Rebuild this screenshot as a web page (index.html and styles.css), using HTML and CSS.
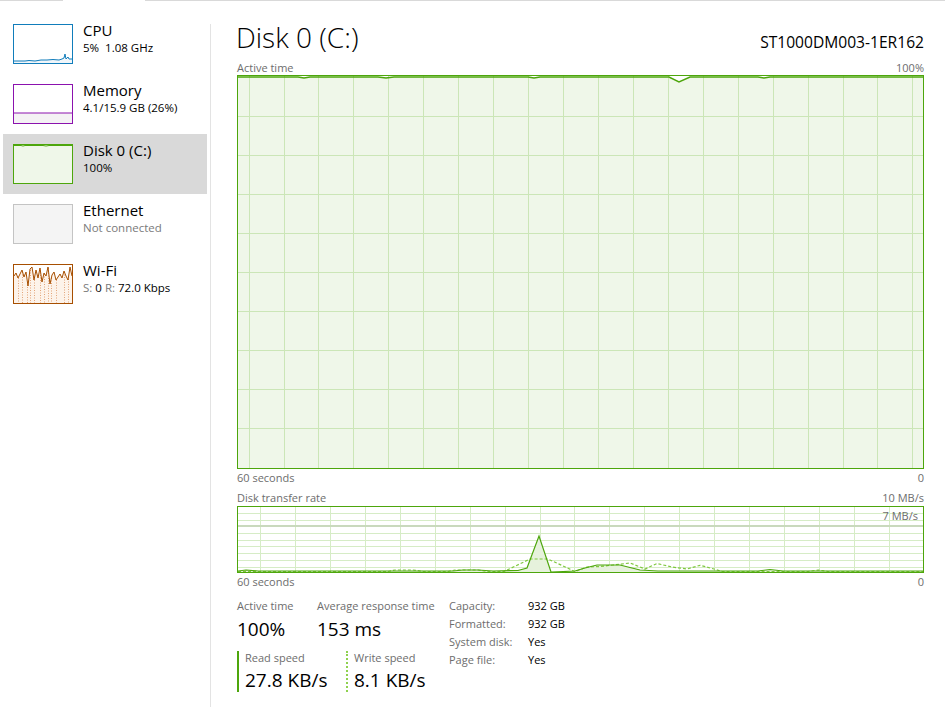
FILE: index.html
```html
<!DOCTYPE html>
<html lang="en">
<head>
    <meta charset="UTF-8">
    <meta name="viewport" content="width=device-width, initial-scale=1.0">
    <title>Task Manager - Performance</title>
    <link rel="stylesheet" href="styles.css">
</head>
<body>
    <div class="tabstrip">
        <div class="tab-seg tab-first"></div>
        <div class="tab-open"></div>
        <div class="tab-seg w71"></div>
        <div class="tab-seg w50"></div>
        <div class="tab-seg w40"></div>
        <div class="tab-seg w47"></div>
        <div class="tab-seg w52"></div>
        <div class="tab-seg tab-rest"></div>
    </div>

    <div class="app">
        <div class="sidebar">
            <div class="item">
                <svg class="thumb" width="60" height="40" viewBox="0 0 60 40">
                    <rect x="0.5" y="0.5" width="59" height="39" fill="#fff" stroke="#117dbb"/>
                    <polygon points="1,37 12,37 16,36.5 22,37 28,36 34,36 40,35.5 46,36 49,35 51,34 52,30 53,35 55,33 56,35 59,35 59,39 1,39" fill="#f1f6fa"/>
                    <polyline points="1,37 12,37 16,36.5 22,37 28,36 34,36 40,35.5 46,36 49,35 51,34 52,30 53,35 55,33 56,35 59,35" fill="none" stroke="#117dbb" stroke-width="1"/>
                </svg>
                <div class="item-text">
                    <div class="item-title">CPU</div>
                    <div class="item-sub">5%&nbsp; 1.08 GHz</div>
                </div>
            </div>
            <div class="item">
                <svg class="thumb" width="60" height="40" viewBox="0 0 60 40">
                    <rect x="0.5" y="0.5" width="59" height="39" fill="#fff" stroke="#8b12ae"/>
                    <rect x="1" y="29" width="58" height="10" fill="#f4f2f4"/>
                    <line x1="1" y1="29" x2="59" y2="29" stroke="#8b12ae" stroke-width="1"/>
                </svg>
                <div class="item-text">
                    <div class="item-title">Memory</div>
                    <div class="item-sub">4.1/15.9 GB (26%)</div>
                </div>
            </div>
            <div class="item selected">
                <svg class="thumb" width="60" height="40" viewBox="0 0 60 40">
                    <rect x="0.5" y="0.5" width="59" height="39" fill="#eff7e9" stroke="#4da60c"/>
                    <polyline points="1,1.5 8,1.5 10,2 12,1.5 30,1.5 33,2 36,1.5 59,1.5" fill="none" stroke="#4da60c" stroke-width="1"/>
                </svg>
                <div class="item-text">
                    <div class="item-title">Disk 0 (C:)</div>
                    <div class="item-sub">100%</div>
                </div>
            </div>
            <div class="item">
                <svg class="thumb" width="60" height="40" viewBox="0 0 60 40">
                    <rect x="0.5" y="0.5" width="59" height="39" fill="#f4f4f4" stroke="#c4c4c4"/>
                </svg>
                <div class="item-text">
                    <div class="item-title">Ethernet</div>
                    <div class="item-sub muted">Not connected</div>
                </div>
            </div>
            <div class="item">
                <svg class="thumb" width="60" height="40" viewBox="0 0 60 40">
                    <rect x="0.5" y="0.5" width="59" height="39" fill="#fff" stroke="#a74f01"/>
                    <polygon points="1,12 3,9 5,14 7,10 9,6 11,13 13,8 15,22 17,5 19,3 21,16 23,6 25,14 27,4 29,18 31,9 33,12 35,3 37,20 39,11 41,8 43,16 45,13 47,10 49,14 51,7 53,12 55,16 57,3 59,12 59,39 1,39" fill="#fdf3ea"/>
                    <g stroke="#e3a57a" stroke-width="1" stroke-dasharray="1,1.5">
                        <line x1="5.5" y1="14" x2="5.5" y2="39"/>
                        <line x1="9.5" y1="8" x2="9.5" y2="39"/>
                        <line x1="14.5" y1="18" x2="14.5" y2="39"/>
                        <line x1="17.5" y1="6" x2="17.5" y2="39"/>
                        <line x1="21.5" y1="16" x2="21.5" y2="39"/>
                        <line x1="27.5" y1="6" x2="27.5" y2="39"/>
                        <line x1="31.5" y1="10" x2="31.5" y2="39"/>
                        <line x1="35.5" y1="4" x2="35.5" y2="39"/>
                        <line x1="38.5" y1="14" x2="38.5" y2="39"/>
                        <line x1="43.5" y1="16" x2="43.5" y2="39"/>
                        <line x1="51.5" y1="8" x2="51.5" y2="39"/>
                        <line x1="55.5" y1="15" x2="55.5" y2="39"/>
                    </g>
                    <polyline points="1,12 3,9 5,14 7,10 9,6 11,13 13,8 15,22 17,5 19,3 21,16 23,6 25,14 27,4 29,18 31,9 33,12 35,3 37,20 39,11 41,8 43,16 45,13 47,10 49,14 51,7 53,12 55,16 57,3 59,12" fill="none" stroke="#a74f01" stroke-width="1"/>
                </svg>
                <div class="item-text">
                    <div class="item-title">Wi-Fi</div>
                    <div class="item-sub"><span class="muted">S:</span> 0 <span class="muted">R:</span> 72.0 Kbps</div>
                </div>
            </div>
        </div>

        <div class="divider"></div>

        <div class="main">
            <div class="page-head">
                <h1>Disk 0 (C:)</h1>
                <div class="model">ST1000DM003-1ER162</div>
            </div>

            <div class="chart-label">
                <span>Active time</span>
                <span>100%</span>
            </div>
            <div class="chart chart-big">
                <svg width="685" height="392" viewBox="0 0 685 392">
                    <polygon points="0,1 60,1 66,2 72,1 140,1 148,2 156,1 290,1 296,2 302,1 431,1 441,6 452,1 520,1 526,2 532,1 685,1 685,392 0,392" fill="#eff7e9"/>
                    <g stroke="#cbe6b7" stroke-width="1">
                        <line x1="11.5" y1="0" x2="11.5" y2="392"/>
                        <line x1="46.5" y1="0" x2="46.5" y2="392"/>
                        <line x1="80.5" y1="0" x2="80.5" y2="392"/>
                        <line x1="115.5" y1="0" x2="115.5" y2="392"/>
                        <line x1="150.5" y1="0" x2="150.5" y2="392"/>
                        <line x1="185.5" y1="0" x2="185.5" y2="392"/>
                        <line x1="220.5" y1="0" x2="220.5" y2="392"/>
                        <line x1="255.5" y1="0" x2="255.5" y2="392"/>
                        <line x1="290.5" y1="0" x2="290.5" y2="392"/>
                        <line x1="325.5" y1="0" x2="325.5" y2="392"/>
                        <line x1="360.5" y1="0" x2="360.5" y2="392"/>
                        <line x1="395.5" y1="0" x2="395.5" y2="392"/>
                        <line x1="430.5" y1="0" x2="430.5" y2="392"/>
                        <line x1="465.5" y1="0" x2="465.5" y2="392"/>
                        <line x1="500.5" y1="0" x2="500.5" y2="392"/>
                        <line x1="535.5" y1="0" x2="535.5" y2="392"/>
                        <line x1="570.5" y1="0" x2="570.5" y2="392"/>
                        <line x1="605.5" y1="0" x2="605.5" y2="392"/>
                        <line x1="639.5" y1="0" x2="639.5" y2="392"/>
                        <line x1="674.5" y1="0" x2="674.5" y2="392"/>
                        <line x1="0" y1="40.5" x2="685" y2="40.5"/>
                        <line x1="0" y1="79.5" x2="685" y2="79.5"/>
                        <line x1="0" y1="118.5" x2="685" y2="118.5"/>
                        <line x1="0" y1="157.5" x2="685" y2="157.5"/>
                        <line x1="0" y1="196.5" x2="685" y2="196.5"/>
                        <line x1="0" y1="235.5" x2="685" y2="235.5"/>
                        <line x1="0" y1="274.5" x2="685" y2="274.5"/>
                        <line x1="0" y1="313.5" x2="685" y2="313.5"/>
                        <line x1="0" y1="352.5" x2="685" y2="352.5"/>
                    </g>
                    <polyline points="0,1 60,1 66,2 72,1 140,1 148,2 156,1 290,1 296,2 302,1 431,1 441,6 452,1 520,1 526,2 532,1 685,1" fill="none" stroke="#4da60c" stroke-width="1.4"/>
                </svg>
            </div>
            <div class="chart-label axis">
                <span>60 seconds</span>
                <span>0</span>
            </div>

            <div class="chart-label second">
                <span>Disk transfer rate</span>
                <span>10 MB/s</span>
            </div>
            <div class="chart chart-small">
                <svg width="685" height="65" viewBox="0 0 685 65">
                    <g stroke="#d6ecc6" stroke-width="1">
                        <line x1="22.5" y1="0" x2="22.5" y2="65"/>
                        <line x1="57.5" y1="0" x2="57.5" y2="65"/>
                        <line x1="92.5" y1="0" x2="92.5" y2="65"/>
                        <line x1="127.5" y1="0" x2="127.5" y2="65"/>
                        <line x1="162.5" y1="0" x2="162.5" y2="65"/>
                        <line x1="197.5" y1="0" x2="197.5" y2="65"/>
                        <line x1="232.5" y1="0" x2="232.5" y2="65"/>
                        <line x1="267.5" y1="0" x2="267.5" y2="65"/>
                        <line x1="302.5" y1="0" x2="302.5" y2="65"/>
                        <line x1="336.5" y1="0" x2="336.5" y2="65"/>
                        <line x1="371.5" y1="0" x2="371.5" y2="65"/>
                        <line x1="406.5" y1="0" x2="406.5" y2="65"/>
                        <line x1="441.5" y1="0" x2="441.5" y2="65"/>
                        <line x1="476.5" y1="0" x2="476.5" y2="65"/>
                        <line x1="511.5" y1="0" x2="511.5" y2="65"/>
                        <line x1="546.5" y1="0" x2="546.5" y2="65"/>
                        <line x1="581.5" y1="0" x2="581.5" y2="65"/>
                        <line x1="616.5" y1="0" x2="616.5" y2="65"/>
                        <line x1="651.5" y1="0" x2="651.5" y2="65"/>
                        <line x1="0" y1="6.5" x2="685" y2="6.5"/>
                        <line x1="0" y1="13.5" x2="685" y2="13.5"/>
                        <line x1="0" y1="26.5" x2="685" y2="26.5"/>
                        <line x1="0" y1="33.5" x2="685" y2="33.5"/>
                        <line x1="0" y1="39.5" x2="685" y2="39.5"/>
                        <line x1="0" y1="46.5" x2="685" y2="46.5"/>
                        <line x1="0" y1="53.5" x2="685" y2="53.5"/>
                        <line x1="0" y1="60.5" x2="685" y2="60.5"/>
                    </g>
                    <line x1="0" y1="19" x2="685" y2="19" stroke="#c9d9bd" stroke-width="2"/>
                    <polygon points="0,64 8,63 20,64 215,64 225,63 240,63 255,64 280,63.5 289,61 301,29 313,65 337,64 347,61 359,58 382,58 402,63 420,64 520,64 532,62.5 545,64 685,64 685,65 0,65" fill="#e6f2dc"/>
                    <polyline points="0,64.5 150,64.5 157,63 175,63 185,64.5 210,64.5 217,63 240,63 250,64.5 266,64.5 292,52 310,52 337,64.5 349,60 362,59.5 375,58 392,56 407,62 419,56.5 434,60 449,62 462,58.3 476,62 484,64.5 570,64.5 580,63 590,64.5 685,64.5" fill="none" stroke="#7fc83f" stroke-width="1.2" stroke-dasharray="3,2"/>
                    <polyline points="0,64 8,63 20,64 215,64 225,63 240,63 255,64 280,63.5 289,61 301,29 313,65 337,64 347,61 359,58 382,58 402,63 420,64 520,64 532,62.5 545,64 685,64" fill="none" stroke="#4da60c" stroke-width="1.2"/>
                </svg>
                <span class="scale-tag">7 MB/s</span>
            </div>
            <div class="chart-label axis">
                <span>60 seconds</span>
                <span>0</span>
            </div>

            <div class="stats">
                <div class="stats-left">
                    <div class="stat-row">
                        <div class="stat w80">
                            <div class="stat-label">Active time</div>
                            <div class="stat-value">100%</div>
                        </div>
                        <div class="stat">
                            <div class="stat-label">Average response time</div>
                            <div class="stat-value">153 ms</div>
                        </div>
                    </div>
                    <div class="stat-row speeds">
                        <div class="stat speed read">
                            <div class="stat-label">Read speed</div>
                            <div class="stat-value">27.8 KB/s</div>
                        </div>
                        <div class="stat speed write">
                            <div class="stat-label">Write speed</div>
                            <div class="stat-value">8.1 KB/s</div>
                        </div>
                    </div>
                </div>
                <div class="props">
                    <div class="prop"><span class="prop-name">Capacity:</span><span>932 GB</span></div>
                    <div class="prop"><span class="prop-name">Formatted:</span><span>932 GB</span></div>
                    <div class="prop"><span class="prop-name">System disk:</span><span>Yes</span></div>
                    <div class="prop"><span class="prop-name">Page file:</span><span>Yes</span></div>
                </div>
            </div>
        </div>
    </div>
</body>
</html>
```

FILE: styles.css
```css
body {
    margin: 0;
    padding: 0;
    background-color: #fff;
    font-family: "Open Sans", "Noto Sans", sans-serif;
    color: #000;
    overflow: hidden;
}

/* strip of tab edges along the top */
.tabstrip {
    display: flex;
    height: 2px;
}
.tab-seg {
    height: 1px;
    border-bottom: 1px solid #d9d9d9;
    border-right: 1px solid #d9d9d9;
    box-sizing: border-box;
}
.tab-first { width: 63px; }
.tab-open { width: 82px; }
.w71 { width: 71px; }
.w50 { width: 50px; }
.w40 { width: 40px; }
.w47 { width: 47px; }
.w52 { width: 52px; }
.tab-rest { flex: 1; margin-right: 2px; }

.app {
    display: flex;
    height: 719px;
}

/* left list */
.sidebar {
    width: 204px;
    padding: 12px 3px 0 3px;
}
.item {
    display: flex;
    height: 60px;
    padding-left: 10px;
    box-sizing: border-box;
}
.item.selected {
    background-color: #d9d9d9;
}
.thumb {
    margin-top: 10px;
    flex-shrink: 0;
}
.item-text {
    padding-top: 6px;
    margin-left: 10px;
}
.item-title {
    font-size: 15px;
    line-height: 20px;
}
.item-sub {
    font-size: 11.5px;
    line-height: 16px;
}
.muted {
    color: #7a7a7a;
}

.divider {
    width: 1px;
    margin: 22px 0 14px 0;
    background-color: #e3e3e3;
}

/* right panel */
.main {
    flex: 1;
    padding: 0 23px 0 26px;
}
.page-head {
    display: flex;
    justify-content: space-between;
    align-items: baseline;
    padding-top: 17px;
    height: 41px;
}
h1 {
    margin: 0 0 0 -1px;
    font-size: 28px;
    font-weight: 300;
    line-height: 36px;
    color: #000;
}
.model {
    font-size: 15.6px;
}

.chart-label {
    display: flex;
    justify-content: space-between;
    font-size: 11px;
    line-height: 15px;
    color: #6d6d6d;
}
.chart-label.axis {
    line-height: 17px;
}
.chart-label.second {
    margin-top: 3px;
    line-height: 17px;
}

.chart {
    border: 1px solid #4da60c;
    background-color: #fff;
    position: relative;
}
.chart svg {
    display: block;
}
.chart-big {
    height: 392px;
}
.chart-small {
    height: 65px;
}
.scale-tag {
    position: absolute;
    top: 2px;
    right: 5px;
    font-size: 11px;
    line-height: 14px;
    color: #6d6d6d;
}

/* numbers under the charts */
.stats {
    display: flex;
    margin-top: 8px;
}
.stats-left {
    width: 212px;
}
.stat-row {
    display: flex;
}
.stat-row.speeds {
    margin-top: 10px;
}
.w80 {
    width: 80px;
}
.stat-label {
    font-size: 11px;
    line-height: 16px;
    color: #6d6d6d;
}
.stat-value {
    margin-top: 3px;
    font-size: 19px;
    line-height: 24px;
}
.speed {
    padding-left: 6px;
}
.speed .stat-label {
    line-height: 14px;
}
.read {
    width: 101px;
    border-left: 2px solid #4da60c;
}
.write {
    border-left: 2px dotted #8fd14f;
}

.props {
    margin-top: -1px;
}
.prop {
    display: flex;
    font-size: 11px;
    line-height: 18px;
}
.prop-name {
    width: 79px;
    color: #6d6d6d;
}
```
